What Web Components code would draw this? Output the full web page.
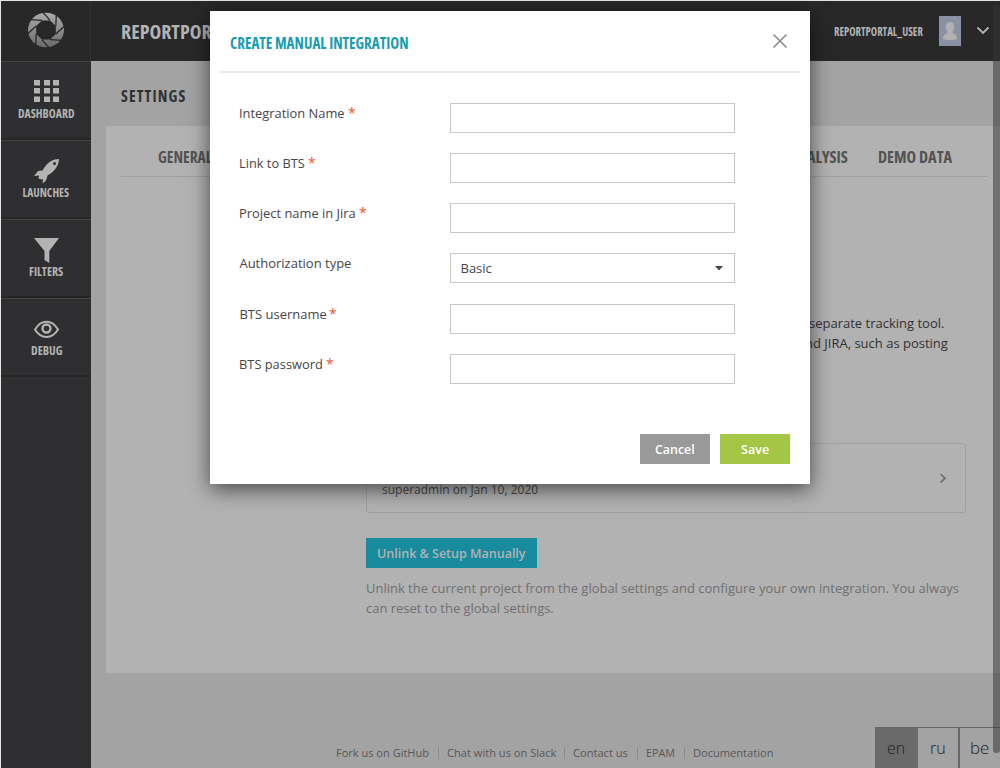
<!DOCTYPE html>
<html lang="en">
<head>
<meta charset="utf-8">
<title>Project settings</title>
<style>
html,body{margin:0;width:1000px;height:768px;overflow:hidden;background:#e0e6e4;font-family:"Open Sans","Noto Sans",sans-serif}
</style>
</head>
<body>
<rp-app></rp-app>
<script>
const define=(name,html,ready)=>customElements.define(name,class extends HTMLElement{
  connectedCallback(){
    if(this.shadowRoot)return;
    const t=document.createElement('template');
    t.innerHTML=html;
    this.attachShadow({mode:'open'}).append(t.content.cloneNode(true));
    if(ready)ready.call(this,this.shadowRoot);
  }
});

/* One line of text drawn at a given pixel width */
define('fit-text',`<style>
:host{display:block;white-space:nowrap}
span{display:inline-block;transform-origin:0 50%}
</style><span><slot></slot></span>`,function(root){
  const s=root.querySelector('span'),w=+this.getAttribute('w');
  this.style.width=w+'px';
  s.style.transform='scaleX('+(w/s.offsetWidth)+')';
});

define('nav-item',`<style>
:host{display:flex;flex-direction:column;align-items:center;height:79px;box-sizing:border-box;border-top:1px solid #434343;border-bottom:2px solid #272728;color:#b3b3b3;padding-top:17px}
::slotted(svg){display:block;fill:#b3b3b3;margin-left:2px}
fit-text{font-stretch:75%;font-weight:700;font-size:11.500px;line-height:14px;margin-top:2px}
</style><slot name="icon"></slot><fit-text></fit-text>`,function(root){
  const f=root.querySelector('fit-text');
  const n=document.createElement('fit-text');
  n.setAttribute('w',this.getAttribute('w'));n.textContent=this.getAttribute('label');f.replaceWith(n);
});

define('side-bar',`<style>
:host{display:block;width:90px;background:#2f2f31}
.logo{height:60px;background:#282828;border-right:1px solid #313131;box-sizing:border-box;display:flex;justify-content:center;padding-top:11px}
</style>
<div class="logo"><svg width="38" height="38" viewBox="0 0 38 38">
<defs><linearGradient id="g" x1="0" y1="0" x2="0" y2="1"><stop offset="0" stop-color="#aaa"/><stop offset="1" stop-color="#6c6c6c"/></linearGradient></defs>
<ellipse cx="19" cy="18" rx="18" ry="17.200" fill="url(#g)"/>
<path id="hole" fill="#282828"/><path id="cuts" stroke="#282828" stroke-width="1.300" fill="none"/></svg></div>
<nav-item label="DASHBOARD" w="56"><svg slot="icon" width="26" height="26" viewBox="0 1 26 26"><path d="M0 2h6v5.500H0zM10 2h6v5.500h-6zM19 2h6v5.500h-6zM0 10h6v5.500H0zM10 10h6v5.500h-6zM19 10h6v5.500h-6zM0 18.500h6V24H0zM10 18.500h6V24h-6zM19 18.500h6V24h-6z"/></svg></nav-item>
<nav-item label="LAUNCHES" w="47"><svg slot="icon" width="26" height="26" viewBox="0 1 26 26"><path fill-rule="evenodd" d="M25 2C19 2 14 5 10 11L8.500 13.500L4 14L0 19L5 18.500L4.500 21.500L7.500 22.500L9 22L8.500 26.500L12 23.500L13.500 18.500C20 15 25 9 25 2ZM20.500 5a1.500 1.500 0 1 1 0 3a1.500 1.500 0 0 1 0-3Z"/></svg></nav-item>
<nav-item label="FILTERS" w="34"><svg slot="icon" width="26" height="26" viewBox="0 1 26 26"><path d="M0 2H25L15.300 15V27L10.500 24V15Z"/></svg></nav-item>
<nav-item label="DEBUG" w="31"><svg slot="icon" width="26" height="26" viewBox="0 0 26 26"><path d="M1 13.500C7 3 18 3 24 13.500C18 23.500 7 23.500 1 13.500Z" fill="none" stroke="#b3b3b3" stroke-width="2"/><circle cx="12.500" cy="12.500" r="4" fill="none" stroke="#b3b3b3" stroke-width="2.400"/></svg></nav-item>`,function(root){
  let h='',c='';
  for(let i=0;i<8;i++){
    const a=(i+.5)*Math.PI/4,b=a-.6;
    const x=19+10.600*Math.cos(a),y=18+10.400*Math.sin(a);
    h+=(i?'L':'M')+x+' '+y;
    c+='M'+x+' '+y+'L'+(19+19*Math.cos(b))+' '+(18+19*Math.sin(b));
  }
  root.querySelector('#hole').setAttribute('d',h+'Z');
  root.querySelector('#cuts').setAttribute('d',c);
});

define('top-bar',`<style>
:host{display:flex;align-items:center;height:60px;background:#282828;color:#b3b3b3;box-sizing:border-box;padding:1px 10px 0 30px;font-stretch:75%;font-weight:700}
.p{font-size:19px}.u{font-size:11.500px;margin-left:auto;margin-right:16px}
.a{margin-right:15px;margin-top:-1px}
svg{display:block}
.c{margin-top:-2px}
</style>
<fit-text class="p" w="91">REPORTPOR</fit-text>
<fit-text class="u" w="89">REPORTPORTAL_USER</fit-text>
<svg class="a" width="22" height="30"><path fill="#8a91a4" d="M0 0h22v30H0z"/><path fill="#b1b1b1" d="M11 6c3 0 4.300 2 4.300 5c0 2-.8 3.500-1.800 4.500c0 3 4.500 2 4.500 7.500c-3 1.300-11 1.300-14 0c0-5.500 4.500-4.500 4.500-7.500c-1-1-1.800-2.500-1.800-4.500c0-3 1.300-5 4.300-5z"/></svg>
<svg class="c" width="14" height="9"><path d="M1.500 1.500L7 7L12.500 1.500" fill="none" stroke="#b3b3b3" stroke-width="1.800"/></svg>`);

define('settings-page',`<style>
:host{display:flex;flex-direction:column;flex:1;background:#a3a3a3;color:#313131}
.h{padding:25px 0 0 30px;height:40px;font-stretch:75%;font-weight:700;font-size:16px;line-height:20px;letter-spacing:1.200px}
.panel{margin-left:15px;height:547px;background:#b2b2b2;box-sizing:border-box;padding:20px 12px 0 15px}
.tabs{display:flex;height:31px;box-sizing:border-box;border-bottom:1px solid #a0a0a0;padding-left:37px;font-stretch:75%;font-weight:700;font-size:16px;line-height:22px;color:#535353;width:867px;justify-content:space-between;padding-right:36px}
.right{display:flex;gap:30px}
.content{padding-left:245px;font-size:13px;line-height:20px}
.desc{height:130px;padding:136px 40px 0 0;display:flex;flex-direction:column}
.desc fit-text{margin-left:443px}
.card{width:600px;height:70px;border:1px solid #a0a0a0;border-radius:3px;box-sizing:border-box;padding:36px 18px 0 15px;display:flex;justify-content:space-between;font-size:12px;color:#484848}
.card svg{margin-top:-8px}
.btn{display:flex;align-items:center;justify-content:center;width:171px;height:30px;background:#188b9e;color:#b3b3b3;font-weight:550;margin-top:25px}
.note{color:#707070;padding-top:10px}
.foot{display:flex;align-items:center;font-size:11.500px;line-height:16px;color:#585858;padding:72px 0 0 245px}
i{width:1px;height:12px;background:#8b8b8b;margin:0 8px 0 8.700px}
</style>
<div class="h"><fit-text w="66">SETTINGS</fit-text></div>
<div class="panel">
<div class="tabs"><fit-text w="54">GENERAL</fit-text><div class="right"><fit-text w="41">ALYSIS</fit-text><fit-text w="74">DEMO DATA</fit-text></div></div>
<div class="content">
<div class="desc"><fit-text w="135">separate tracking tool.</fit-text><fit-text w="143" style="margin-left:439px">nd JIRA, such as posting</fit-text></div>
<div class="card"><fit-text w="156">superadmin on Jan 10, 2020</fit-text><svg width="8" height="12"><path d="M1.500 2L6 6.200L1.500 10.500" fill="none" stroke="#6d6d6d" stroke-width="1.700"/></svg></div>
<div class="btn"><fit-text w="149">Unlink &amp; Setup Manually</fit-text></div>
<div class="note"><fit-text w="593">Unlink the current project from the global settings and configure your own integration. You always</fit-text><fit-text w="188">can reset to the global settings.</fit-text></div>
</div></div>
<div class="foot"><fit-text w="93">Fork us on GitHub</fit-text><i></i><fit-text w="109">Chat with us on Slack</fit-text><i></i><fit-text w="55">Contact us</fit-text><i></i><fit-text w="29">EPAM</fit-text><i></i><fit-text w="80">Documentation</fit-text></div>`);

define('form-row',`<style>
:host{display:flex;justify-content:space-between;height:30px;font-size:13px;color:#464547}
.l{display:flex;gap:2.500px;line-height:20px;margin-left:-.6px}
b{color:#f0532d;font-weight:400;font-size:14px}
.f{width:285px;height:30px;box-sizing:border-box;border:1px solid #c7c7c7;display:flex;align-items:center;justify-content:space-between;padding:0 11px 0 9.500px}
</style><div class="l"></div><div class="f"><slot></slot></div>`,function(root){
  root.querySelector('.l').innerHTML='<fit-text w="'+this.getAttribute('w')+'">'+this.getAttribute('label')+'</fit-text>'+(this.hasAttribute('required')?'<b>*</b>':'');
});

define('integration-modal',`<style>
:host{position:absolute;left:210px;top:11px;width:600px;height:473px;box-sizing:border-box;padding:0 10px;background:#fff;box-shadow:0 5px 20px rgba(0,0,0,.6);display:flex;flex-direction:column}
header{display:flex;justify-content:space-between;align-items:flex-start;height:62px;box-sizing:border-box;border-bottom:2px solid #e9e9e9;padding:21px 12px 0 9.500px;color:#1a9cb0;font-stretch:75%;font-weight:700;font-size:15.500px;line-height:22px}
.rows{display:flex;flex-direction:column;gap:20px;padding:30px 65px 0 20px}
footer{margin-top:50px;display:flex;justify-content:flex-end;gap:10px;padding-right:10px;color:#fff;font-size:13px;font-weight:550}
.b{width:70px;height:30px;box-sizing:border-box;padding-right:1px;display:flex;align-items:center;justify-content:center;background:#999}
.s{background:#a3c644}
.x{margin:1px 0 0}
.gap{margin-top:1px}
</style>
<header><fit-text w="179">CREATE MANUAL INTEGRATION</fit-text><svg class="x" width="16" height="16"><path d="M1.500 1.500L14.500 14.500M14.500 1.500L1.500 14.500" stroke="#8e8e8e" stroke-width="1.700"/></svg></header>
<div class="rows">
<form-row label="Integration Name" w="106" required></form-row>
<form-row label="Link to BTS" w="66" required></form-row>
<form-row label="Project name in Jira" w="117" required></form-row>
<form-row label="Authorization type" w="112"><fit-text w="31">Basic</fit-text><svg width="8" height="5"><path d="M0 0H8L4 4.500Z" fill="#464547"/></svg></form-row>
<form-row class="gap" label="BTS username" w="87" required></form-row>
<form-row label="BTS password" w="84" required></form-row>
</div>
<footer><div class="b"><fit-text w="40">Cancel</fit-text></div><div class="b s"><fit-text w="28">Save</fit-text></div></footer>`);

define('lang-switch',`<style>
:host{position:absolute;left:875px;top:727px;width:125px;height:41px;display:grid;grid-template-columns:43px 40px 42px;background:#a3a3a3;font-size:16px;font-weight:300;line-height:22px;color:#222;border-top:1px solid #686868;box-sizing:border-box}
div{padding:9px 0 0 12px}
.on{background:#6a6a6a}
.l{border-left:2px solid #686868;padding-left:10px}
</style><div class="on"><fit-text w="18">en</fit-text></div><div><fit-text w="16">ru</fit-text></div><div class="l"><fit-text w="19">be</fit-text></div>`);

define('rp-app',`<style>
:host{display:flex;position:relative;width:1000px;height:768px;box-sizing:border-box;padding:1px 0 0 1px;overflow:hidden}
.main{display:flex;flex-direction:column;flex:1}
.bar{position:absolute;left:993px;top:4px;width:7px;height:749px;border-radius:3px;background:rgba(52,52,52,.52)}
</style><side-bar></side-bar><div class="main"><top-bar></top-bar><settings-page></settings-page></div><lang-switch></lang-switch><div class="bar"></div><integration-modal></integration-modal>`);
</script>
</body>
</html>
